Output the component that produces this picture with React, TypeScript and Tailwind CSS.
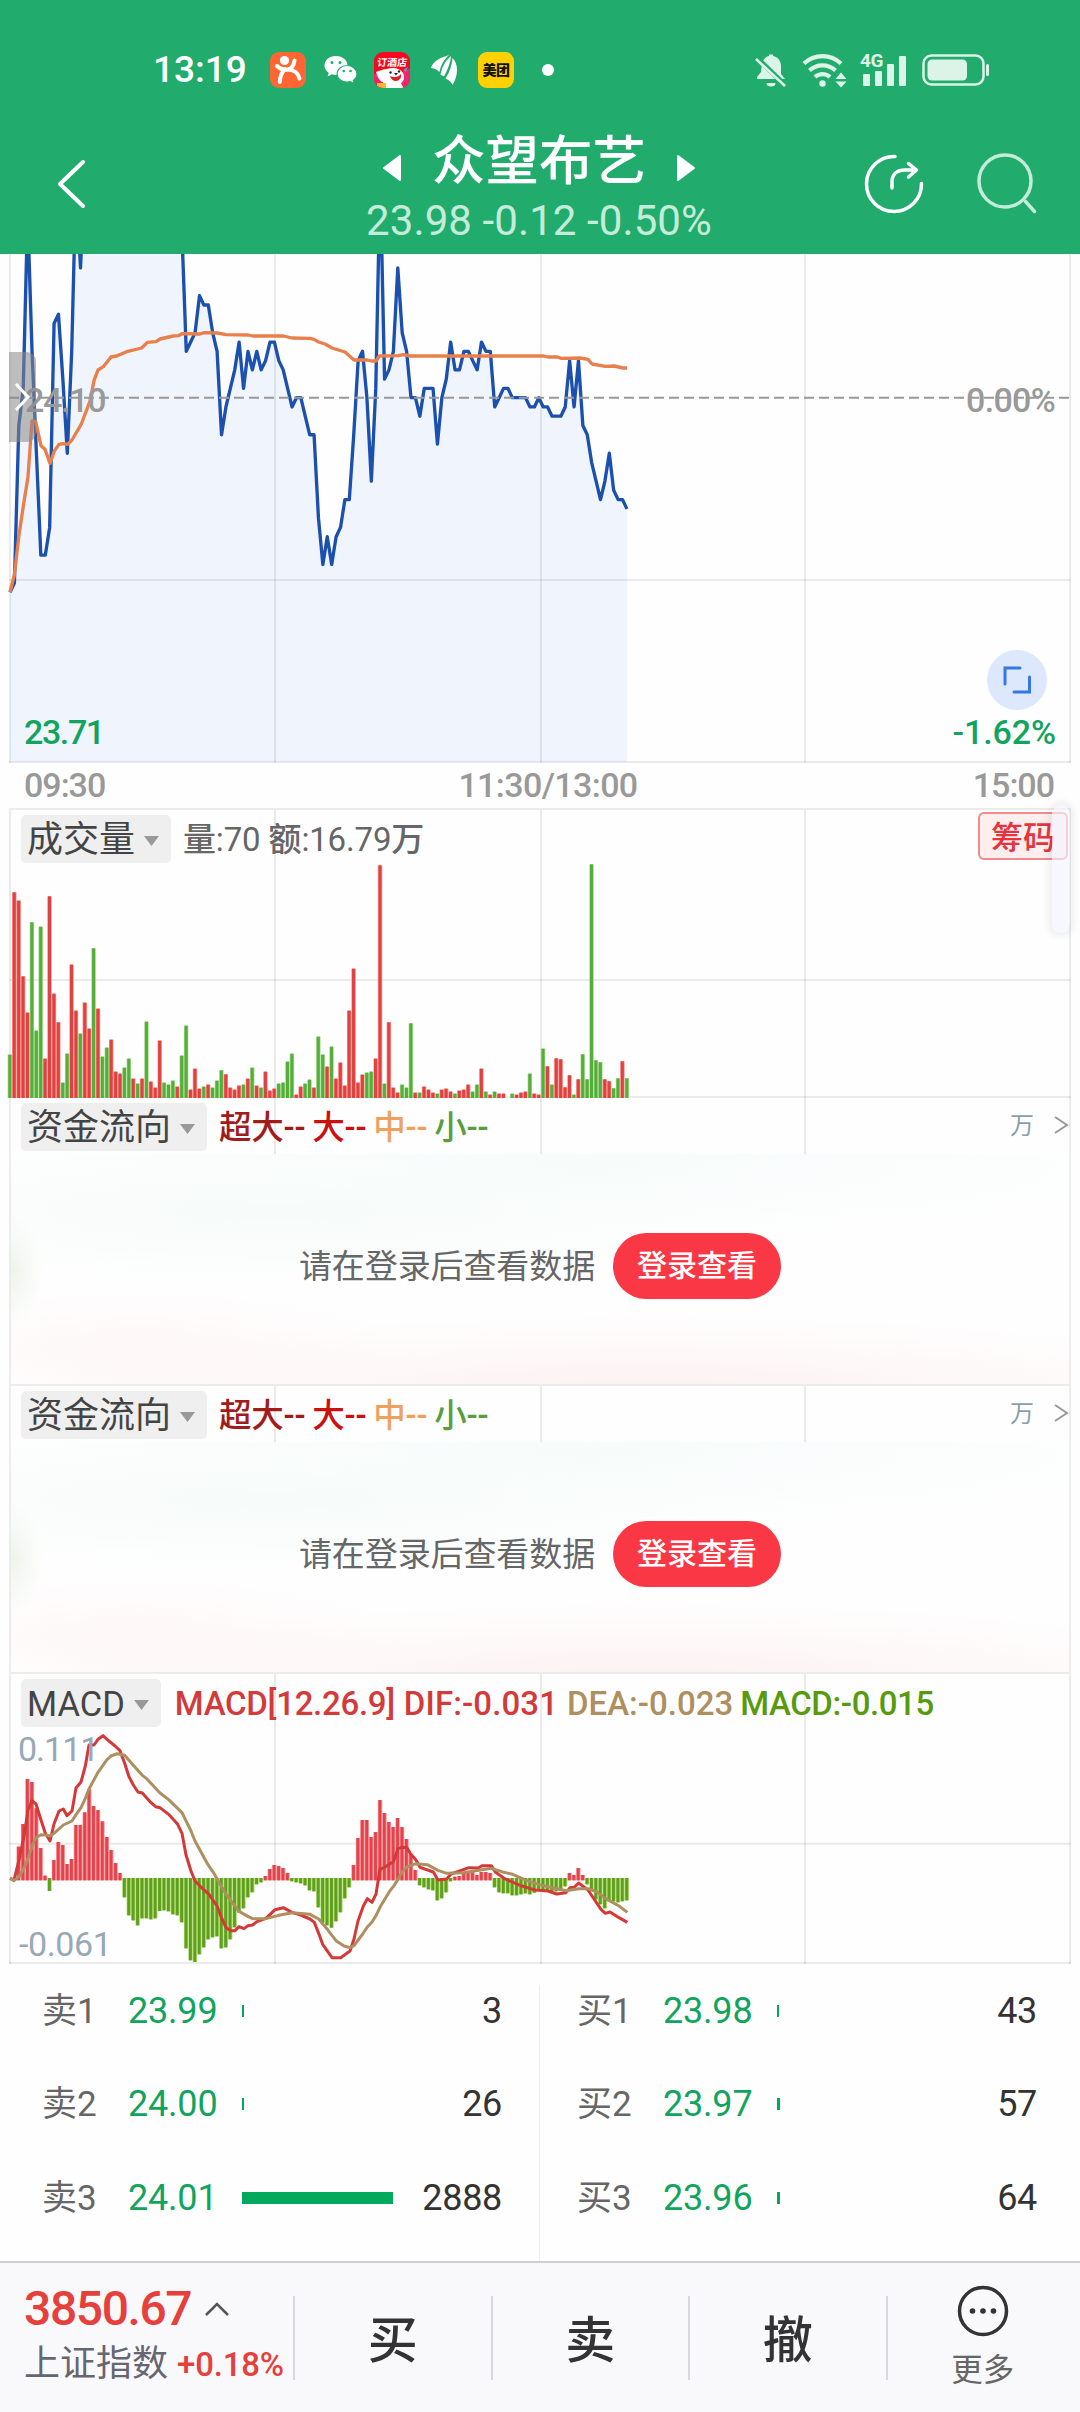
import type { ReactNode } from "react";

// All charts use three units per pixel, one minute is STEP units wide.
const STEP = 13.22;
const LEFT = 30;
const minuteX = (i: number) => LEFT + STEP * i;

// Price per minute, in cents relative to the previous close (24.10).
const PRICE = [
  -21, -20, -3, 1, 20, 5, -6, -17, -17, -14, 8, 9, 2, -6, 5, 24, 14, 25, 25, 25, 25, 25, 25, 25, 25,
  25, 25, 25, 25, 25, 25, 25, 25, 25, 25, 25, 25, 25, 25, 18, 5, 6, 7, 11, 10, 10, 7, 5, -4, -1, 1,
  3, 6, 1, 5, 3, 5, 3, 4, 6, 6, 4, 3, 1, -1, 0, 0, -2, -4, -4, -13, -18, -15, -18, -15, -14, -11,
  -11, -4, 4, 5, 0, -9, 1, 24, 2, 3, 5, 14, 7, 5, 0, 0, -2, 1, 1, 1, -5, 0, 2, 6, 3, 3, 5, 5, 4, 3,
  6, 5, 5, -1, 0, 1, 1, 0, 0, 0, 0, -1, -1, 0, -1, -1, -2, -2, -2, -1, 4, -1, 4, -3, -4, -7, -9,
  -11, -9, -6, -10, -11, -11, -12,
];

const AVERAGE =
  "30,1026 43,975 57,855 70,768 84,680 96,513 107,515 123,587 135,598 150,640 163,603 177,583 190,581 203,583 216,570 244,522 270,453 282,392 294,360 310,350 333,321 350,318 380,305 425,294 442,277 468,275 480,267 520,258 535,257 546,251 600,252 613,248 652,249 678,254 745,255 758,258 850,258 876,264 930,265 942,268 956,276 975,282 996,294 1035,306 1062,330 1102,330 1114,333 1128,333 1138,318 1194,317 1210,314 1232,318 1632,318 1644,321 1672,321 1684,325 1740,324 1764,328 1776,342 1816,349 1842,348 1869,354 1881,354";

const VOLUME =
  "g130 r617 r592 r365 r256 g527 g202 g514 r118 r605 r313 r227 g46 g133 r400 r262 g193 r286 r208 g449 r268 g124 g151 r175 r79 r73 g91 g118 r58 g43 r58 g229 r49 r31 r172 g46 g40 g52 r34 g127 g217 r25 r88 r28 g34 r40 g31 g52 g83 r71 r31 r25 r37 g40 r58 g91 r37 g31 r79 r22 r28 g43 g46 g109 g133 r10 r34 g43 g55 r31 g184 g130 r94 g154 r58 r106 r37 r262 r388 r46 r70 g76 g79 r118 r698 g43 r227 r31 r16 g40 g31 g224 r16 g16 r34 r25 r16 g13 r25 r28 r19 g13 r22 r25 r40 g19 g40 r88 g19 r10 g19 r13 r13 r0 g13 r10 r16 r19 g73 r13 r10 g148 r95 g40 r119 r116 r32 r68 g10 r56 g131 g56 g701 g113 g107 r56 r50 g29 g59 r110 g59".split(
    " ",
  );

const MACD_BARS = [
  0, 0, 97, 165, 300, 291, 212, 93, 10, -35, 57, 111, 102, 45, 60, 162, 162, 200, 270, 219, 207,
  173, 126, 87, 48, 18, -54, -108, -123, -138, -117, -117, -120, -117, -95, -93, -96, -105, -108,
  -129, -207, -243, -248, -225, -204, -180, -174, -171, -207, -204, -180, -144, -100, -87, -54, -39,
  -15, -9, 9, 30, 42, 39, 33, 18, -6, -9, -12, -18, -33, -36, -84, -130, -138, -145, -126, -99, -57,
  -24, 42, 123, 177, 177, 126, 141, 237, 198, 171, 156, 183, 156, 120, 75, 27, -18, -24, -30, -33,
  -63, -57, -39, -6, 7, 9, 15, 20, 20, 12, 21, 21, 18, -24, -39, -42, -42, -48, -48, -45, -42, -45,
  -40, -33, -33, -36, -36, -36, -33, -21, 18, 12, 33, 12, -15, -36, -60, -75, -87, -66, -66, -69,
  -66, -63,
];

const DIF =
  "30,655 42,660 57,600 72,530 84,450 96,422 108,432 123,480 136,520 150,543 162,492 177,453 190,447 201,467 216,453 228,384 243,366 256,318 267,255 282,255 294,238 309,227 321,238 345,258 360,272 374,310 387,350 400,375 414,396 427,399 453,428 467,440 480,443 506,463 533,493 546,520 558,585 573,633 585,663 612,690 627,703 651,738 666,777 679,804 693,812 705,812 717,800 732,806 744,797 758,795 771,785 798,775 825,749 850,743 876,757 902,765 930,777 943,787 956,820 968,853 996,893 1022,893 1050,873 1062,837 1074,783 1090,738 1102,716 1116,727 1128,702 1140,628 1155,621 1180,605 1194,566 1206,562 1221,563 1232,582 1248,600 1260,622 1300,636 1314,660 1340,657 1353,642 1407,623 1435,624 1446,617 1474,617 1486,636 1512,655 1560,676 1605,690 1644,693 1670,702 1698,698 1710,683 1722,682 1736,669 1764,690 1803,748 1816,760 1830,756 1857,773 1882,787";

const DEA =
  "30,655 42,662 57,650 72,625 84,595 96,558 108,533 123,524 138,525 150,528 162,520 190,495 216,483 228,464 243,443 256,415 267,387 294,337 321,299 333,288 352,281 374,286 400,316 427,346 440,356 480,399 506,419 546,458 573,513 585,543 624,614 640,637 651,657 679,704 717,754 745,770 758,776 798,776 837,766 876,758 930,763 956,777 982,808 1008,842 1032,858 1050,863 1062,857 1088,822 1102,801 1116,786 1128,767 1142,738 1168,695 1182,677 1194,658 1206,636 1221,621 1248,611 1282,614 1314,631 1340,640 1390,638 1474,625 1512,637 1538,643 1572,658 1605,670 1644,680 1698,692 1736,686 1764,686 1790,695 1816,715 1857,738 1882,757";

const ASKS = [
  { label: "卖1", price: "23.99", qty: "3", bar: 2 },
  { label: "卖2", price: "24.00", qty: "26", bar: 2 },
  { label: "卖3", price: "24.01", qty: "2888", bar: 151 },
];

const BIDS = [
  { label: "买1", price: "23.98", qty: "43", bar: 2 },
  { label: "买2", price: "23.97", qty: "57", bar: 3 },
  { label: "买3", price: "23.96", qty: "64", bar: 3 },
];

function StatusBar() {
  return (
    <div className="flex h-[140px] items-center pl-[153px]">
      <span className="mt-[-2px] w-[117px] text-[37px] leading-none font-medium">13:19</span>
      <svg className="h-9 w-9" viewBox="0 0 36 36">
        <rect width="36" height="36" rx="9" fill="#ff6633" />
        <circle cx="14.5" cy="8.5" r="4.6" fill="#fff" />
        <path
          d="M7 14c3 3 7 4 11 3.500 4-1 6-5 6.500-9M15 17c-4 4-5 8-5.200 13M17 17.500c6 0 11 3 12.500 9"
          fill="none"
          stroke="#fff"
          strokeWidth="4"
          strokeLinecap="round"
        />
      </svg>
      <svg className="ml-[18px] h-[30px] w-[34px]" viewBox="0 0 34 30">
        <path
          d="M12 1C5.400 1 0.500 5.200 0.500 10.500c0 3 1.600 5.500 4.200 7.300L3.600 21.500l4.300-2.200c1.300.4 2.600.6 4.100.6 6.600 0 11.500-4.200 11.500-9.400S18.600 1 12 1z"
          fill="#fff"
        />
        <path
          d="M23 10.500c-5.600 0-10 3.800-10 8.300s4.400 8.400 10 8.400c1.200 0 2.400-.2 3.500-.5l3.700 2-.9-3.300c2.300-1.600 3.700-3.900 3.700-6.600 0-4.500-4.400-8.300-10-8.300z"
          fill="#fff"
          stroke="#21ac6e"
          strokeWidth="1.200"
        />
        <g fill="#21ac6e">
          <circle cx="8" cy="7.500" r="1.500" />
          <circle cx="16" cy="7.500" r="1.500" />
          <circle cx="19.800" cy="16" r="1.300" />
          <circle cx="26.500" cy="16" r="1.300" />
        </g>
      </svg>
      <div className="relative ml-4 h-9 w-9 overflow-hidden rounded-[9px] bg-[#f8081c]">
        <svg className="absolute inset-0" viewBox="0 0 36 36">
          <path d="M0 22c8 0 26 2 36-6v20H0z" fill="#f0246c" />
          <path
            d="M2 20c3-1 7-3 11-3 6-2 13-1 16 4 2 4 1 8-2 10l3 6H10l-1-7c-3 0-6-6-7-10z"
            fill="#fff"
          />
          <path d="M16 24c4 2 9 1 11-2 1 4-2 7-5 7s-5-2-6-5z" fill="#d8232b" />
          <circle cx="16.500" cy="20.500" r="1.200" fill="#222" />
          <circle cx="25" cy="19.500" r="1.200" fill="#222" />
          <path d="M20 21l4 0-2 2.500z" fill="#222" />
          <path d="M3 31h9v5H3z" fill="#ffb52b" />
          <path d="M29 18l5-3-2 5z" fill="#4f9df5" />
        </svg>
        <span className="absolute top-[6px] left-[3px] -skew-x-6 text-[10px] leading-none font-bold whitespace-nowrap">
          订酒店
        </span>
      </div>
      <svg className="ml-[21px] h-[30px] w-[27px]" viewBox="0 0 27 30" fill="#fff">
        <path d="M0 13C2 6 9 3 18 0 13 5 10 9 8.500 17 6 14.500 4 13.500 0 13z" />
        <path d="M9.500 20C11 12 14 6 20 1c-.5 7-3 13-7 20.500-1-1-2-1-3.500-1.500z" />
        <path d="M14.500 23.500c4-6 6.500-13 7-20.500 6 6 6 17 0 27-1-3-3.500-5-7-6.500z" />
      </svg>
      <div className="ml-5 flex h-9 w-9 items-center justify-center rounded-[9px] bg-[#ffd100] text-[14px] leading-none font-black tracking-[-0.5px] text-[#111]">
        美团
      </div>
      <span className="ml-7 h-3 w-3 rounded-full bg-white" />

      <svg className="mt-[-1px] ml-[201px] h-[36px] w-[32px]" viewBox="0 0 32 36" fill="#dcf3e8">
        <path d="M7 12C8 7 11 4.500 14 4V2.500h4V4c5 1 8 5 8 10v8l4 5H2v-2l4-5z" />
        <path d="M11.500 31h9a4.500 3.500 0 0 1-9 0z" />
        <path d="M2 6l28 27" stroke="#21ac6e" strokeWidth="5" />
        <path d="M1 7l29 27" stroke="#dcf3e8" strokeWidth="2.600" />
      </svg>
      <svg className="ml-[15px] h-[36px] w-[46px]" viewBox="0 0 46 36">
        <g fill="none" stroke="#dcf3e8" strokeWidth="4.200">
          <path d="M2 11.500a27 27 0 0 1 37 0" />
          <path d="M7.500 18.500a19 19 0 0 1 26 0" />
          <path d="M13 25a11 11 0 0 1 15 0" />
        </g>
        <circle cx="20.500" cy="31.500" r="3.200" fill="#dcf3e8" />
        <path d="M39 20.500l5.500 6.500h-11zM39 35.500l5.500-6h-11z" fill="#dcf3e8" />
      </svg>
      <div className="relative ml-[14px] h-[36px] w-[46px]">
        <svg className="absolute inset-0" viewBox="0 0 46 36" fill="#dcf3e8">
          <rect x="1" y="22" width="7" height="12" rx="1" />
          <rect x="13" y="19" width="7" height="15" rx="1" />
          <rect x="25" y="12" width="7" height="22" rx="1" />
          <rect x="37" y="4" width="7" height="30" rx="1" />
        </svg>
        <span className="absolute top-[-1px] left-[-2px] text-[19px] leading-none font-bold tracking-[-0.5px] text-[#dcf3e8]">
          4G
        </span>
      </div>
      <svg className="ml-[14px] h-[32px] w-[69px]" viewBox="0 0 69 32">
        <rect x="1.500" y="1.500" width="60" height="29" rx="8" fill="none" stroke="#dcf3e8" strokeWidth="2.500" />
        <rect x="5.500" y="5.500" width="39.500" height="21" rx="4.500" fill="#dcf3e8" />
        <rect x="64" y="10" width="3" height="12" rx="1.500" fill="#dcf3e8" />
      </svg>
    </div>
  );
}

function TitleBar() {
  return (
    <div className="flex h-[114px]">
      <svg className="mt-[16px] ml-[53px] h-[56px] w-[36px]" viewBox="0 0 36 56">
        <path
          d="M30 6L7 28l23 22"
          fill="none"
          stroke="#fff"
          strokeWidth="4"
          strokeLinecap="round"
          strokeLinejoin="round"
        />
      </svg>
      <div className="ml-[270px] flex w-[360px] flex-col items-center">
        <div className="mt-[-9px] flex items-center gap-[30px]">
          <svg className="mt-3 h-[28px] w-[20px]" viewBox="0 0 20 28">
            <path d="M18 2v24L2 14z" fill="#fff" stroke="#fff" strokeWidth="2" strokeLinejoin="round" />
          </svg>
          <h1 className="text-[53.5px] leading-[62px] font-medium whitespace-nowrap">众望布艺</h1>
          <svg className="mt-3 h-[28px] w-[20px]" viewBox="0 0 20 28">
            <path d="M2 2v24l16-12z" fill="#fff" stroke="#fff" strokeWidth="2" strokeLinejoin="round" />
          </svg>
        </div>
        <p className="mt-[3px] text-[42px] leading-[50px] tracking-[0.1px] whitespace-nowrap text-[#c5ecda]">
          23.98 -0.12 -0.50%
        </p>
      </div>
      <div className="mt-[9px] mr-[38px] ml-auto flex gap-[46px]">
        <svg className="h-[68px] w-[68px]" viewBox="0 0 68 68" fill="none" stroke="#fff" strokeWidth="3.500" strokeLinecap="round" strokeLinejoin="round">
          <path d="M35 7.500A27.500 27.500 0 1 0 61.500 34.500" />
          <path d="M32 39V33c0-8 5-12 13-12h11M48.500 14.500l8 6.500-8 7" />
        </svg>
        <svg className="h-[68px] w-[68px]" viewBox="0 0 68 68" fill="none" stroke="#c5ecda" strokeWidth="3.500" strokeLinecap="round">
          <circle cx="31" cy="32" r="26" />
          <path d="M51.500 52.500l9 10" />
        </svg>
      </div>
    </div>
  );
}

// Vertical quarter lines with one horizontal line through the panel.
function Grid({ top, height, mid }: { top: number; height: number; mid: number }) {
  return (
    <g stroke="#000" strokeOpacity="0.08" strokeWidth="6">
      {[30, 825, 1623, 2415, 3210].map((x) => (
        <path key={x} d={`M${x} ${top}V${top + height}`} />
      ))}
      <path d={`M27 ${mid}H3213`} />
      <path d={`M27 ${top + height - 3}H3213`} />
    </g>
  );
}

function PriceChart() {
  const line = PRICE.map((p, i) => `${minuteX(i).toFixed(1)},${(443 - p * 27.8).toFixed(1)}`).join(" ");
  return (
    <section className="relative h-[509px] overflow-hidden">
      <svg className="absolute inset-0 h-[509px] w-[1080px]" viewBox="0 12 3240 1527">
        <polygon points={`${line} 1881,1536 30,1536`} fill="#eff4fd" />
        <Grid top={12} height={1527} mid={990} />
        <polyline points={line} fill="none" stroke="#1c50ae" strokeWidth="10" strokeLinejoin="round" />
        <polyline points={AVERAGE} fill="none" stroke="#e97f4b" strokeWidth="10" strokeLinejoin="round" />
      </svg>
      <span className="absolute top-[126px] left-[25px] text-[34px] leading-[40px] font-medium tracking-[-1.3px] text-[#999]">
        24.10
      </span>
      <span className="absolute top-[126px] right-[25px] text-[34px] leading-[40px] font-medium tracking-[-0.7px] text-[#999]">
        0.00%
      </span>
      <svg className="absolute inset-0 h-[509px] w-[1080px]" viewBox="0 12 3240 1527">
        <path d="M27 443H3213" stroke="#999" strokeWidth="6" strokeDasharray="30 15" />
      </svg>
      <div className="absolute top-[98px] left-[9px] flex h-[90px] w-[27px] items-center rounded-r-[9px] bg-[#888]/55 pl-1">
        <svg className="h-[36px] w-[18px]" viewBox="0 0 18 36">
          <path d="M3 5l12 13L3 31" fill="none" stroke="#fff" strokeWidth="3" />
        </svg>
      </div>
      <div className="absolute top-[396px] right-[33px] h-[60px] w-[60px] rounded-full bg-[#dde8fc]">
        <svg viewBox="0 0 60 60" fill="none" stroke="#3478e8" strokeWidth="3" strokeLinecap="round">
          <path d="M18 34V18h15M27 42h15.500V27" />
        </svg>
      </div>
      <span className="absolute bottom-[11px] left-[24px] text-[34px] leading-[40px] font-medium tracking-[-1.4px] text-[#12a45e]">
        23.71
      </span>
      <span className="absolute right-[24px] bottom-[11px] text-[34px] leading-[40px] font-medium tracking-[-0.1px] text-[#12a45e]">
        -1.62%
      </span>
    </section>
  );
}

function IndicatorChip({ children }: { children: ReactNode }) {
  return (
    <div className="flex h-[48px] items-center gap-[8px] rounded-[5px] bg-[#efefef] pr-[11px] pl-[6px] leading-none text-[#444]">
      <span className="mt-[2px]">{children}</span>
      <svg className="mt-[3px] h-[12px] w-[17px]" viewBox="0 0 17 12">
        <path d="M1 1h15L8.500 11z" fill="#999" />
      </svg>
    </div>
  );
}

function VolumeChart() {
  return (
    <section className="relative h-[290px]">
      <svg className="absolute inset-0 h-[290px] w-[1080px]" viewBox="0 0 3240 870">
        <Grid top={0} height={870} mid={516} />
        <path d="M27 3H3213" stroke="#ebebeb" strokeWidth="6" />
        {VOLUME.map((v, i) => {
          const h = Number(v.slice(1));
          const red = v[0] === "r";
          return (
            <g key={i}>
              <rect x={minuteX(i) - 7} y={870 - h} width="13.2" height={h} fill={red ? "#ff8f8a" : "#a3dc8c"} />
              <rect x={minuteX(i) - 5} y={870 - h} width="9" height={h} fill={red ? "#dd4340" : "#57ad3c"} />
            </g>
          );
        })}
      </svg>
      <div className="relative flex items-start pt-[7px] pl-[21px] text-[36px]">
        <IndicatorChip>成交量</IndicatorChip>
        <span className="ml-[12px] text-[33px] leading-[49px] font-[450] tracking-[-0.15px] whitespace-nowrap text-[#666]">
          量:70 额:16.79万
        </span>
      </div>
      <div className="absolute top-[4px] right-[12px] flex h-[48px] w-[90px] items-center justify-center rounded-[6px] border-2 border-[#f08a8c] bg-[#ffeeee] pt-[3px] text-[32px] leading-none font-medium text-[#e6343e]">
        筹码
      </div>
      <div className="absolute top-[-3px] right-[10px] h-[128px] w-[18px] rounded-full bg-[#f3f5fd]/65 shadow-[0_0_6px_4px_rgba(0,0,0,0.06)]" />
    </section>
  );
}

function FundFlow() {
  return (
    <section className="h-[288px]">
      <div className="relative h-[56px]">
        <svg className="absolute inset-0 h-[56px] w-[1080px]" viewBox="0 0 3240 168">
          <path
            d="M30 0V168M825 0V168M1623 0V168M2415 0V168M3210 0V168"
            stroke="#ebebeb"
            strokeWidth="6"
          />
        </svg>
        <div className="relative flex items-center pt-[5px] pr-[11px] pl-[21px] text-[36px]">
          <IndicatorChip>资金流向</IndicatorChip>
          <div className="ml-[12px] flex gap-[7px] pt-[2px] text-[32.5px] leading-[46px] font-medium tracking-[-0.2px] whitespace-nowrap">
            <span className="text-[#a11b1b]">超大--</span>
            <span className="text-[#cc1010]">大--</span>
            <span className="text-[#efa15c]">中--</span>
            <span className="text-[#5a9d3c]">小--</span>
          </div>
          <span className="mt-[-3px] ml-auto text-[24px] leading-[44px] text-[#8d9eaa]">万</span>
          <svg className="mt-[-5px] ml-[19px] h-[20px] w-[16px]" viewBox="0 0 16 20">
            <path d="M2 2l12 8-12 8" fill="none" stroke="#999" strokeWidth="2" />
          </svg>
        </div>
      </div>
      <div className="mr-[9px] ml-[9px] flex h-[232px] items-center justify-center border-x-2 border-b-2 border-[#ececec] bg-[radial-gradient(ellipse_55%_30%_at_55%_5%,#f7fcfb_0%,transparent_100%),radial-gradient(ellipse_50%_30%_at_25%_25%,#f6fbf9_0%,transparent_100%),radial-gradient(ellipse_60%_35%_at_60%_105%,#fdf1f1_0%,transparent_100%),radial-gradient(ellipse_25%_25%_at_12%_85%,#fef7f7_0%,transparent_100%),radial-gradient(ellipse_3%_25%_at_0%_50%,#eef3ea_0%,transparent_100%)] pb-[6px]">
        <span className="text-[33px] leading-none tracking-[-0.1px] text-[#666]">请在登录后查看数据</span>
        <button
          type="button"
          className="ml-[18px] h-[66px] w-[168px] rounded-full bg-[#f93745] text-[30px] leading-[62px] font-medium text-white"
        >
          登录查看
        </button>
      </div>
    </section>
  );
}

function MacdChart() {
  return (
    <section className="relative h-[290px]">
      <svg className="absolute inset-0 h-[290px] w-[1080px]" viewBox="0 42 3240 870">
        <Grid top={42} height={870} mid={551} />
        {MACD_BARS.map((v, i) => {
          if (v === 0) return null;
          const red = v > 0;
          const y = red ? 657 - v : 654;
          const h = Math.abs(v) + 4;
          return (
            <g key={i}>
              <rect x={minuteX(i) - 7} y={y} width="13.2" height={h} fill={red ? "#ff9094" : "#a9dc6c"} />
              <rect x={minuteX(i) - 5} y={y} width="8.5" height={h} fill={red ? "#e0454e" : "#619d1f"} />
            </g>
          );
        })}
      </svg>
      <div className="relative flex items-start pt-[5px] pl-[21px] text-[34.5px]">
        <IndicatorChip>MACD</IndicatorChip>
        <div className="ml-[14px] flex gap-[9px] pt-px text-[33px] leading-[48px] font-medium whitespace-nowrap">
          <span className="tracking-[-0.3px] text-[#d33a3a]">MACD[12.26.9]</span>
          <span className="tracking-[0.1px] text-[#d33a3a]">DIF:-0.031</span>
          <span className="text-[#ad8f60]">DEA:-0.023</span>
          <span className="ml-[-2px] tracking-[-0.4px] text-[#579a0c]">MACD:-0.015</span>
        </div>
      </div>
      <svg className="absolute inset-0 h-[290px] w-[1080px]" viewBox="0 42 3240 870">
        <polyline points={DIF} fill="none" stroke="#d63838" strokeWidth="9" strokeLinejoin="round" />
        <polyline points={DEA} fill="none" stroke="#ad8f60" strokeWidth="9" strokeLinejoin="round" />
      </svg>
      <span className="absolute top-[55px] left-[18px] text-[34px] leading-[40px] font-[450] tracking-[-1px] text-[#98a9b5]">
        0.111
      </span>
      <span className="absolute bottom-0 left-[19px] text-[34px] leading-[40px] font-[450] tracking-[-0.4px] text-[#98a9b5]">
        -0.061
      </span>
    </section>
  );
}

function BookSide({ rows }: { rows: typeof ASKS }) {
  return (
    <div>
      {rows.map((row) => (
        <div key={row.label} className="flex h-[93.6px] w-[460px] items-center text-[36px] leading-none">
          <span className="w-[86px] pt-px text-[35px] text-[#666]">{row.label}</span>
          <span className="w-[114px] tracking-[-0.2px] text-[#12a45e]">{row.price}</span>
          <span className="h-[12px] bg-[#00a95c]" style={{ width: row.bar }} />
          <span className="ml-auto tracking-[-0.3px] text-[#333]">{row.qty}</span>
        </div>
      ))}
    </div>
  );
}

function OrderBook() {
  return (
    <section className="flex h-[297px] pl-[42px]">
      <BookSide rows={ASKS} />
      <div className="mt-[21px] mr-[37px] ml-[37px] w-px bg-[#eee]" />
      <BookSide rows={BIDS} />
    </section>
  );
}

function TradeBar() {
  return (
    <footer className="flex h-[151px] items-center border-t-2 border-[#cfcfd2] bg-[#f9f9fc]">
      <div className="w-[293px] pt-px pl-[24px]">
        <div className="flex items-center gap-[13px]">
          <span className="text-[48px] leading-[52px] font-medium tracking-[-1.4px] text-[#e5403b]">3850.67</span>
          <svg className="h-[16px] w-[26px]" viewBox="0 0 26 16">
            <path d="M2 14L13 3l11 11" fill="none" stroke="#555" strokeWidth="2.500" />
          </svg>
        </div>
        <div className="flex items-baseline gap-[9px] whitespace-nowrap">
          <span className="text-[36px] leading-[58px] text-[#666670]">上证指数</span>
          <span className="text-[33px] font-medium tracking-[-0.2px] text-[#e5403b]">+0.18%</span>
        </div>
      </div>
      {["买", "卖", "撤"].map((label) => (
        <button
          key={label}
          type="button"
          className="h-[84px] w-[197.500px] border-l-2 border-[#d9d9dd] pt-[3px] text-[50px] leading-[84px] font-medium text-[#333]"
        >
          {label}
        </button>
      ))}
      <div className="flex h-[84px] flex-1 flex-col items-center justify-center border-l-2 border-[#d9d9dd] pt-px pr-[2px]">
        <svg className="h-[52px] w-[52px] shrink-0" viewBox="0 0 52 52">
          <circle cx="26" cy="26" r="23.500" fill="none" stroke="#333" strokeWidth="3.500" />
          <g fill="#333">
            <circle cx="15.500" cy="26" r="2.800" />
            <circle cx="26" cy="26" r="2.800" />
            <circle cx="36.500" cy="26" r="2.800" />
          </g>
        </svg>
        <span className="mt-[14px] text-[31.5px] leading-[40px] text-[#666]">更多</span>
      </div>
    </footer>
  );
}

export default function App() {
  return (
    <div className="h-[2412px] w-[1080px] overflow-hidden bg-[#fefefe] font-['Roboto','Noto_Sans_CJK_SC',sans-serif]">
      <header className="h-[254px] bg-[#21ac6e] text-white">
        <StatusBar />
        <TitleBar />
      </header>
      <PriceChart />
      <div className="grid h-[45px] grid-cols-3 px-[24px] text-[34px] leading-[45px] font-medium tracking-[-1px] text-[#999]">
        <span>09:30</span>
        <span className="pl-[16px] text-center tracking-[-0.6px]">11:30/13:00</span>
        <span className="pr-[2px] text-right">15:00</span>
      </div>
      <VolumeChart />
      <FundFlow />
      <FundFlow />
      <MacdChart />
      <OrderBook />
      <TradeBar />
    </div>
  );
}
